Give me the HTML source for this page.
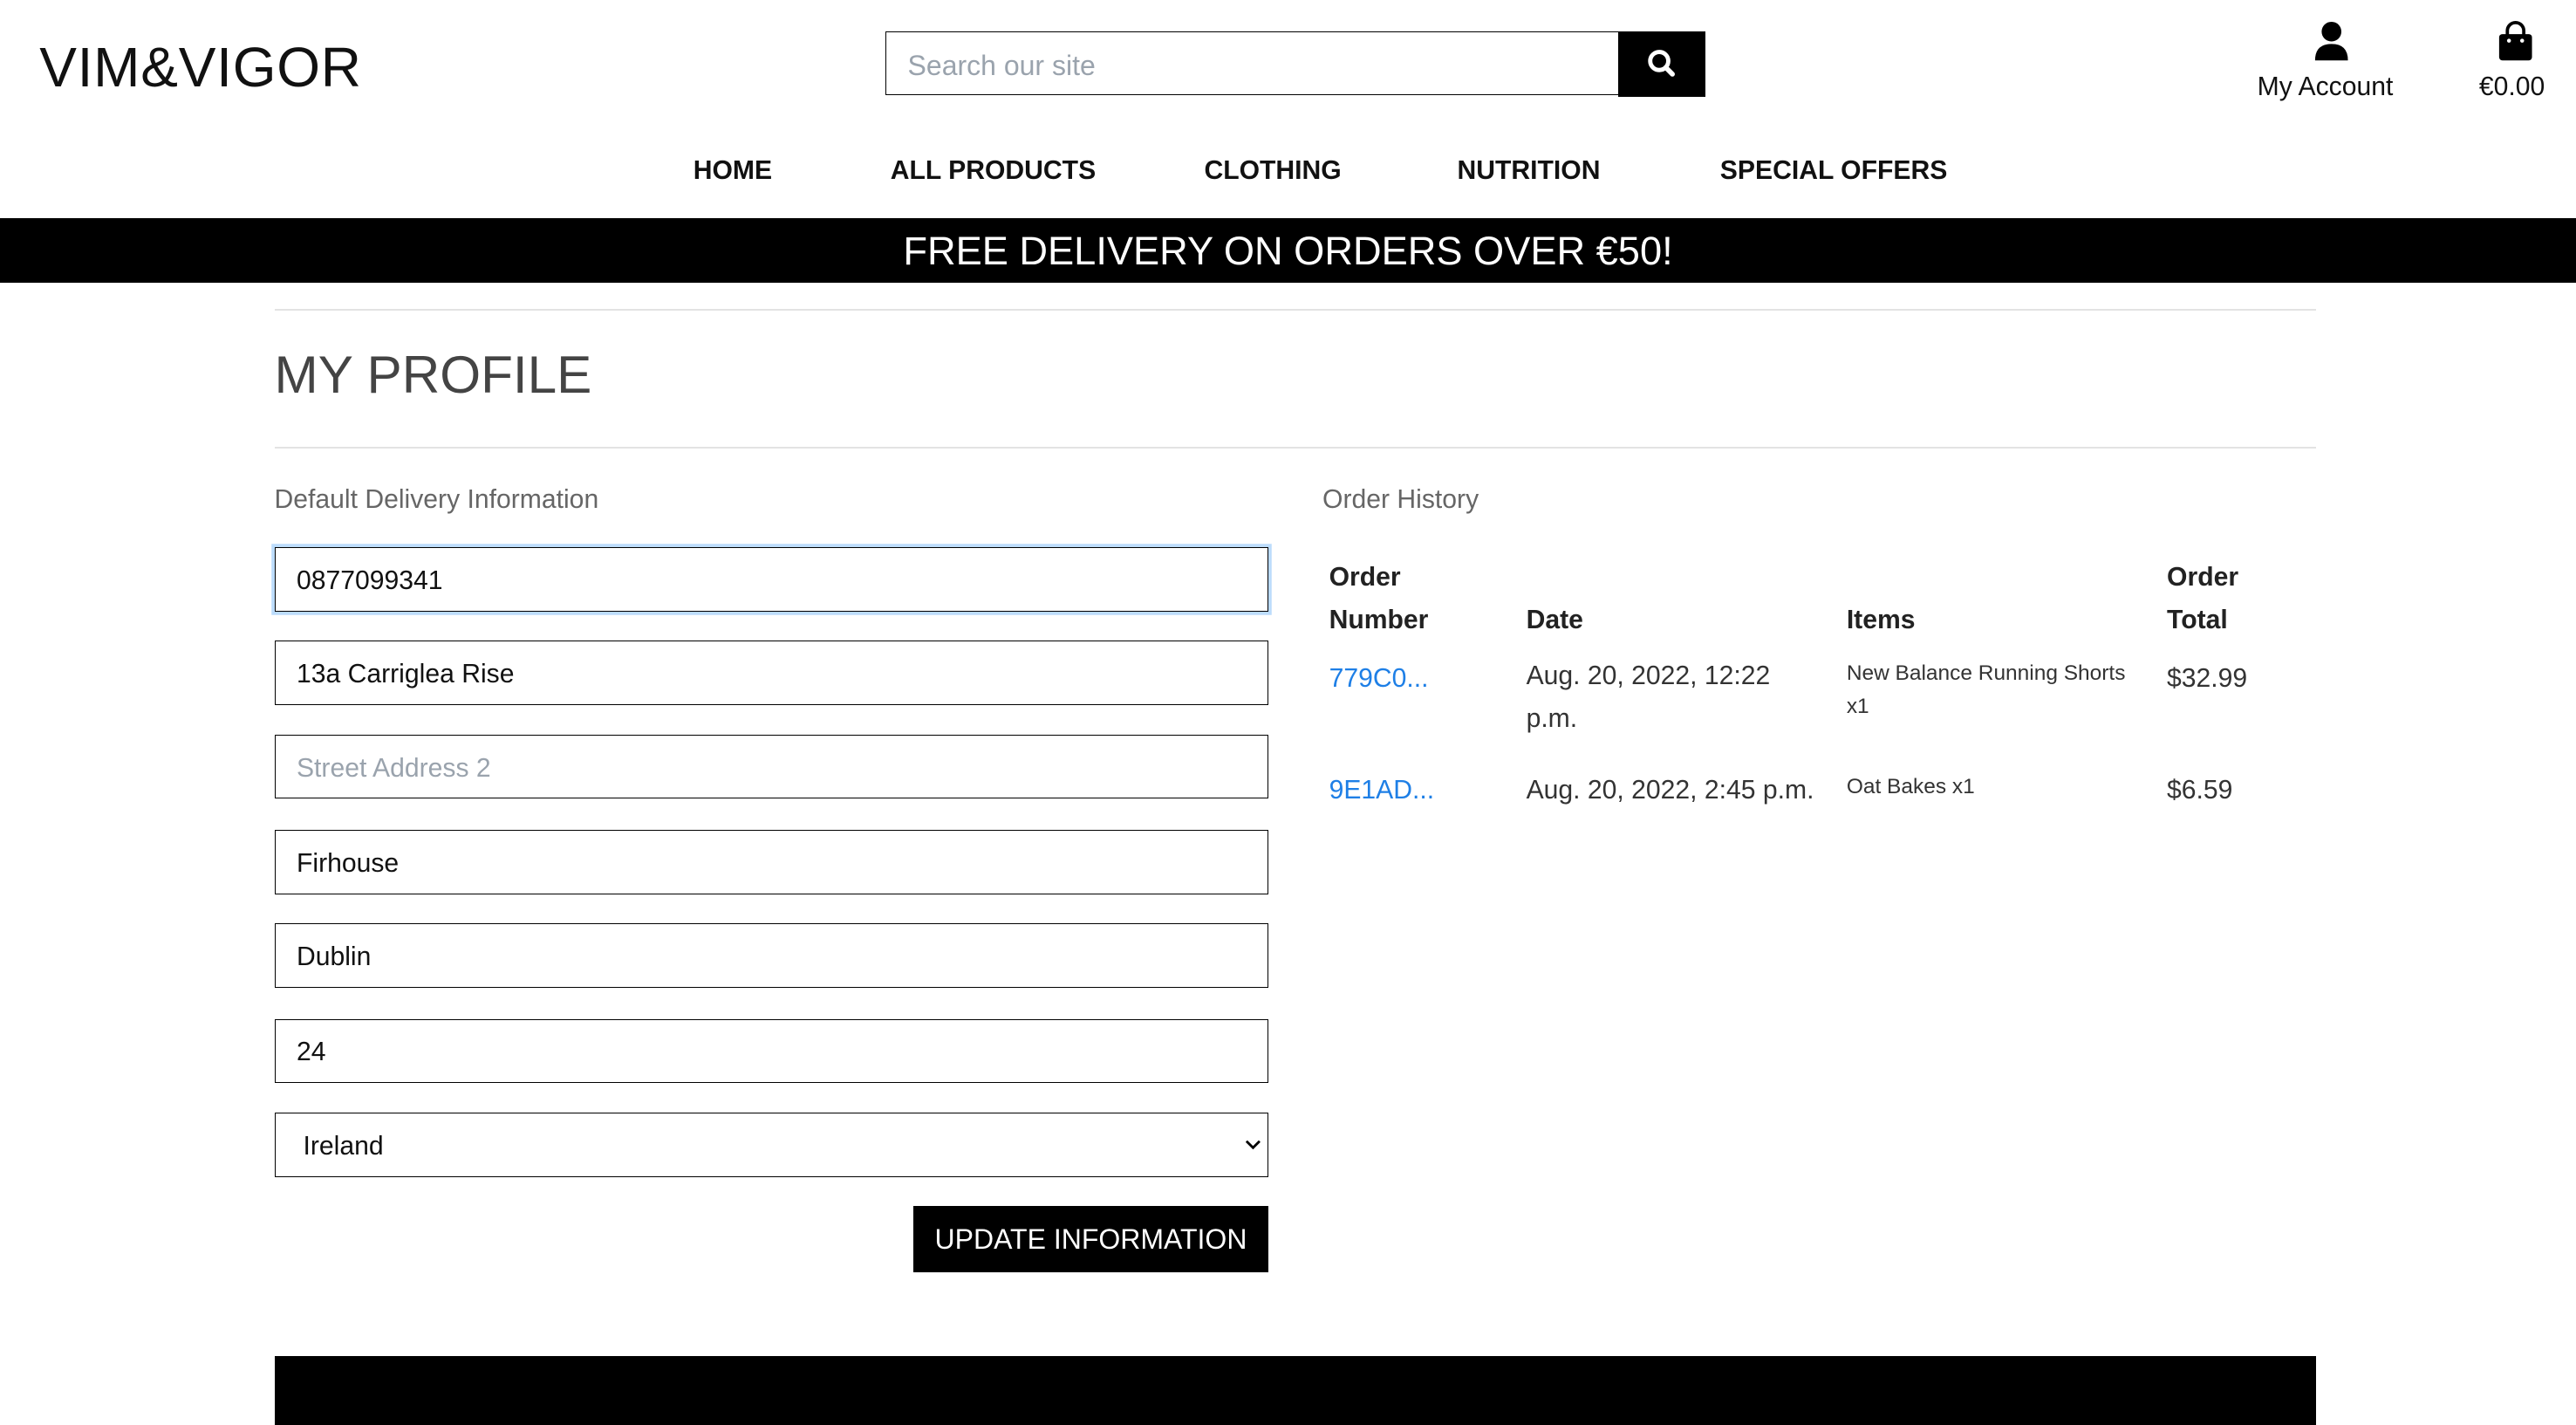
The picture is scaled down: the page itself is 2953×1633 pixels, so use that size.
<!DOCTYPE html>
<html><head><meta charset="utf-8"><style>
html,body{margin:0;padding:0;background:#fff;overflow:hidden}
body{width:1568px;height:867px;zoom:1.88329;position:relative;font-family:"Liberation Sans",sans-serif;color:#222}
.a{position:absolute;white-space:nowrap}
.logo{left:24px;top:21px;font-size:34px;letter-spacing:0.4px;color:#111}
.search{left:539px;top:19px;width:446px;height:38px;border:1px solid #000;border-right:none;box-sizing:content-box}
.search span{position:absolute;left:13px;top:11px;font-size:17px;color:#9aa3ad}
.sbtn{left:985px;top:19px;width:53px;height:40px;background:#000}
.nav{top:95px;font-size:16px;font-weight:bold;color:#111}
.banner{left:0;top:133px;width:1568px;height:39px;background:#000;color:#fff;font-size:24px;text-align:center;line-height:40px}
.hr{left:167px;width:1243px;height:1px;background:#e3e3e3}
.h1{left:167px;top:209px;font-size:32px;color:#444}
.sub{top:295px;font-size:16px;color:#666}
.inp{left:167px;width:604px;height:38px;border:1px solid #000}
.inp span{position:absolute;left:13px;top:11px;font-size:16px;color:#111}
.th{font-size:16px;font-weight:bold;color:#222;line-height:26px}
.td{font-size:16px;color:#333}
.lnk{color:#1e7fe6}
.sm{font-size:13px;color:#333;line-height:20px}
</style></head><body>
<div class="a logo">VIM&amp;VIGOR</div>
<div class="a search"><span>Search our site</span></div>
<div class="a sbtn"><svg width="53" height="40"><circle cx="25" cy="18" r="5.5" fill="none" stroke="#fff" stroke-width="2.6"/><line x1="29" y1="22" x2="33" y2="26" stroke="#fff" stroke-width="3" stroke-linecap="round"/></svg></div>
<svg class="a" style="left:1408px;top:13px" width="22" height="24"><circle cx="11" cy="6.5" r="6" fill="#000"/><path d="M1 24 Q1 14 11 14 Q21 14 21 24Z" fill="#000"/></svg>
<div class="a" style="left:1374px;top:44px;font-size:16px;color:#111">My Account</div>
<svg class="a" style="left:1520px;top:13px" width="22" height="24"><path d="M6 9 V6 A5 5 0 0 1 16 6 V9" fill="none" stroke="#000" stroke-width="2"/><rect x="1" y="8" width="20" height="16" rx="2" fill="#000"/><circle cx="7" cy="12" r="1.2" fill="#fff"/><circle cx="15" cy="12" r="1.2" fill="#fff"/></svg>
<div class="a" style="left:1509px;top:44px;font-size:16px;color:#111">€0.00</div>
<div class="a nav" style="left:422px">HOME</div>
<div class="a nav" style="left:542px">ALL PRODUCTS</div>
<div class="a nav" style="left:733px">CLOTHING</div>
<div class="a nav" style="left:887px">NUTRITION</div>
<div class="a nav" style="left:1047px">SPECIAL OFFERS</div>
<div class="a banner">FREE DELIVERY ON ORDERS OVER €50!</div>
<div class="a hr" style="top:188px"></div>
<div class="a h1">MY PROFILE</div>
<div class="a hr" style="top:272px"></div>
<div class="a sub" style="left:167px">Default Delivery Information</div>
<div class="a sub" style="left:805px">Order History</div>
<div class="a inp" style="top:333px;box-shadow:0 0 0 2px #bcdcfc"><span>0877099341</span></div>
<div class="a inp" style="top:390px"><span>13a Carriglea Rise</span></div>
<div class="a inp" style="top:447px"><span style="color:#9aa3ad">Street Address 2</span></div>
<div class="a inp" style="top:505px"><span>Firhouse</span></div>
<div class="a inp" style="top:562px"><span>Dublin</span></div>
<div class="a inp" style="top:620px"><span>24</span></div>
<div class="a inp" style="top:677px"><span style="left:17px">Ireland</span><svg style="position:absolute;right:4px;top:15px" width="10" height="8"><path d="M1 2 L5 6 L9 2" fill="none" stroke="#000" stroke-width="1.5"/></svg></div>
<div class="a" style="left:556px;top:734px;width:216px;height:40px;background:#000;color:#fff;font-size:17px;line-height:41px;text-align:center">UPDATE INFORMATION</div>
<div class="a th" style="left:809px;top:339px">Order<br>Number</div>
<div class="a th" style="left:929px;top:365px">Date</div>
<div class="a th" style="left:1124px;top:365px">Items</div>
<div class="a th" style="left:1319px;top:339px">Order<br>Total</div>
<div class="a td lnk" style="left:809px;top:404px">779C0...</div>
<div class="a td" style="left:929px;top:399px;line-height:26px">Aug. 20, 2022, 12:22<br>p.m.</div>
<div class="a sm" style="left:1124px;top:400px">New Balance Running Shorts<br>x1</div>
<div class="a td" style="left:1319px;top:404px">$32.99</div>
<div class="a td lnk" style="left:809px;top:472px">9E1AD...</div>
<div class="a td" style="left:929px;top:472px">Aug. 20, 2022, 2:45 p.m.</div>
<div class="a sm" style="left:1124px;top:469px">Oat Bakes x1</div>
<div class="a td" style="left:1319px;top:472px">$6.59</div>
<div class="a" style="left:167px;top:825px;width:1243px;height:42px;background:#000"></div>
</body></html>
